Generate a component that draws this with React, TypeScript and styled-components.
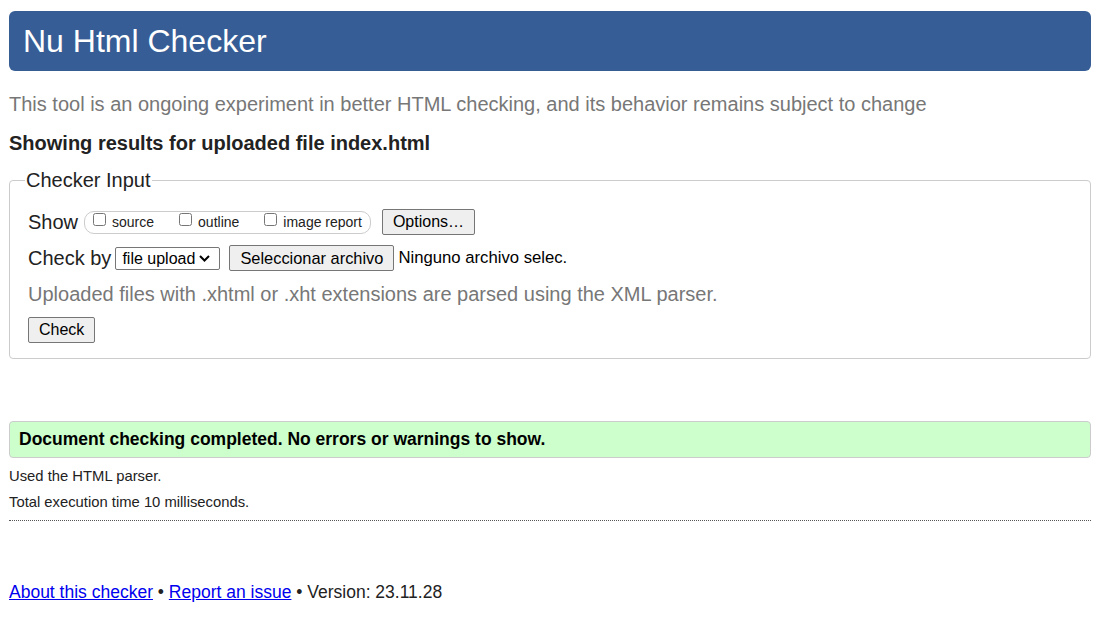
import React from "react";
import styled, { createGlobalStyle } from "styled-components";

const Global = createGlobalStyle`
  html, body { margin: 0; padding: 0; background: #fff; }
  body { font-family: "Liberation Sans", Arial, sans-serif; color: #222; }
`;

const Page = styled.div`
  padding: 11px 16px 0 9px;
`;

const Header = styled.header`
  background: #365d95;
  border-radius: 6px;
  height: 60px;
  display: flex;
  align-items: center;
  padding-left: 14px;
`;

const Title = styled.h1`
  margin: 0;
  font-size: 32px;
  font-weight: normal;
  color: #fff;
`;

const Intro = styled.p`
  margin: 22px 0 0;
  font-size: 20px;
  color: #777;
`;

const Showing = styled.h2`
  margin: 16px 0 0;
  font-size: 20px;
  font-weight: bold;
  color: #222;
`;

const Fieldset = styled.fieldset`
  margin: 14px 0 0;
  border: 1px solid #ccc;
  border-radius: 4px;
  padding: 17px 18px 15px 18px;
  display: flex;
  flex-direction: column;
`;

const Legend = styled.legend`
  font-size: 20px;
  padding: 0 1px;
  margin-left: -3px;
  color: #222;
`;

const Row = styled.div<{ $top?: number }>`
  display: flex;
  align-items: center;
  gap: 4px;
  font-size: 20px;
  color: #222;
  margin-top: ${(p) => p.$top ?? 0}px;
`;

const Pill = styled.div`
  display: flex;
  align-items: center;
  border: 1px solid #ccc;
  border-radius: 10px;
  height: 21px;
  padding: 0 8px 0 8px;
  gap: 25px;
  margin: 0 7px 0 2px;
`;

const CheckLabel = styled.label`
  display: flex;
  align-items: center;
  font-size: 14px;
  color: #222;
  input {
    margin: 0 6px 0 0;
    width: 13px;
    height: 13px;
    position: relative;
    top: -3px;
  }
`;

const Button = styled.button<{ $size?: number }>`
  font-family: "Liberation Sans", Arial, sans-serif;
  font-size: ${(p) => p.$size ?? 16}px;
  background: #efefef;
  border: 1px solid #767676;
  border-radius: 2px;
  padding: 2px 10px;
  height: 26px;
  color: #000;
`;

const SelectBox = styled.div`
  display: flex;
  align-items: center;
  width: 105px;
  height: 23px;
  box-sizing: border-box;
  border: 1px solid #767676;
  border-radius: 2px;
  background: #fff;
  margin-right: 5px;
  padding-right: 9px;
  svg { flex: none; pointer-events: none; }
`;

const Select = styled.select`
  appearance: none;
  flex: 1;
  min-width: 0;
  font-family: "Liberation Sans", Arial, sans-serif;
  font-size: 16px;
  border: none;
  background: transparent;
  color: #000;
  padding: 0 0 0 6px;
  outline: none;
`;

const NoFile = styled.span`
  font-size: 16.7px;
  color: #000;
`;

const Hint = styled.p`
  margin: 12px 0 0;
  font-size: 20px;
  color: #777;
`;

const Success = styled.div`
  margin-top: 62px;
  background: #ccffcc;
  border: 1px solid #ccc;
  border-radius: 4px;
  height: 35px;
  display: flex;
  align-items: center;
  padding-left: 9px;
  font-size: 17.5px;
  font-weight: bold;
  color: #000;
`;

const Detail = styled.p`
  margin: 0;
  font-size: 14.8px;
  line-height: 26px;
  color: #222;
`;

const Details = styled.div`
  margin-top: 5px;
  border-bottom: 1px dotted #555;
  padding-bottom: 5px;
`;

const Footer = styled.footer`
  margin-top: 61px;
  font-size: 17.5px;
  color: #222;
  a { color: #00e; text-decoration: underline; }
`;

export default function App() {
  return (
    <Page>
      <Global />
      <Header>
        <Title>Nu Html Checker</Title>
      </Header>
      <Intro>This tool is an ongoing experiment in better HTML checking, and its behavior remains subject to change</Intro>
      <Showing>Showing results for uploaded file index.html</Showing>
      <Fieldset>
        <Legend>Checker Input</Legend>
        <Row>
          <span>Show</span>
          <Pill>
            <CheckLabel><input type="checkbox" />source</CheckLabel>
            <CheckLabel><input type="checkbox" />outline</CheckLabel>
            <CheckLabel><input type="checkbox" />image report</CheckLabel>
          </Pill>
          <Button>Options…</Button>
        </Row>
        <Row $top={10}>
          <span>Check by</span>
          <SelectBox>
            <Select defaultValue="file"><option value="file">file upload</option></Select>
            <svg width="11" height="7" viewBox="0 0 11 7" aria-hidden="true">
              <path d="M1 1 L5.5 5.5 L10 1" fill="none" stroke="#000" strokeWidth="2" />
            </svg>
          </SelectBox>
          <Button $size={16.4}>Seleccionar archivo</Button>
          <NoFile>Ninguno archivo selec.</NoFile>
        </Row>
        <Hint>Uploaded files with .xhtml or .xht extensions are parsed using the XML parser.</Hint>
        <Row $top={11}>
          <Button>Check</Button>
        </Row>
      </Fieldset>
      <Success>Document checking completed. No errors or warnings to show.</Success>
      <Details>
        <Detail>Used the HTML parser.</Detail>
        <Detail>Total execution time 10 milliseconds.</Detail>
      </Details>
      <Footer>
        <a href="#">About this checker</a> • <a href="#">Report an issue</a> • Version: 23.11.28
      </Footer>
    </Page>
  );
}
